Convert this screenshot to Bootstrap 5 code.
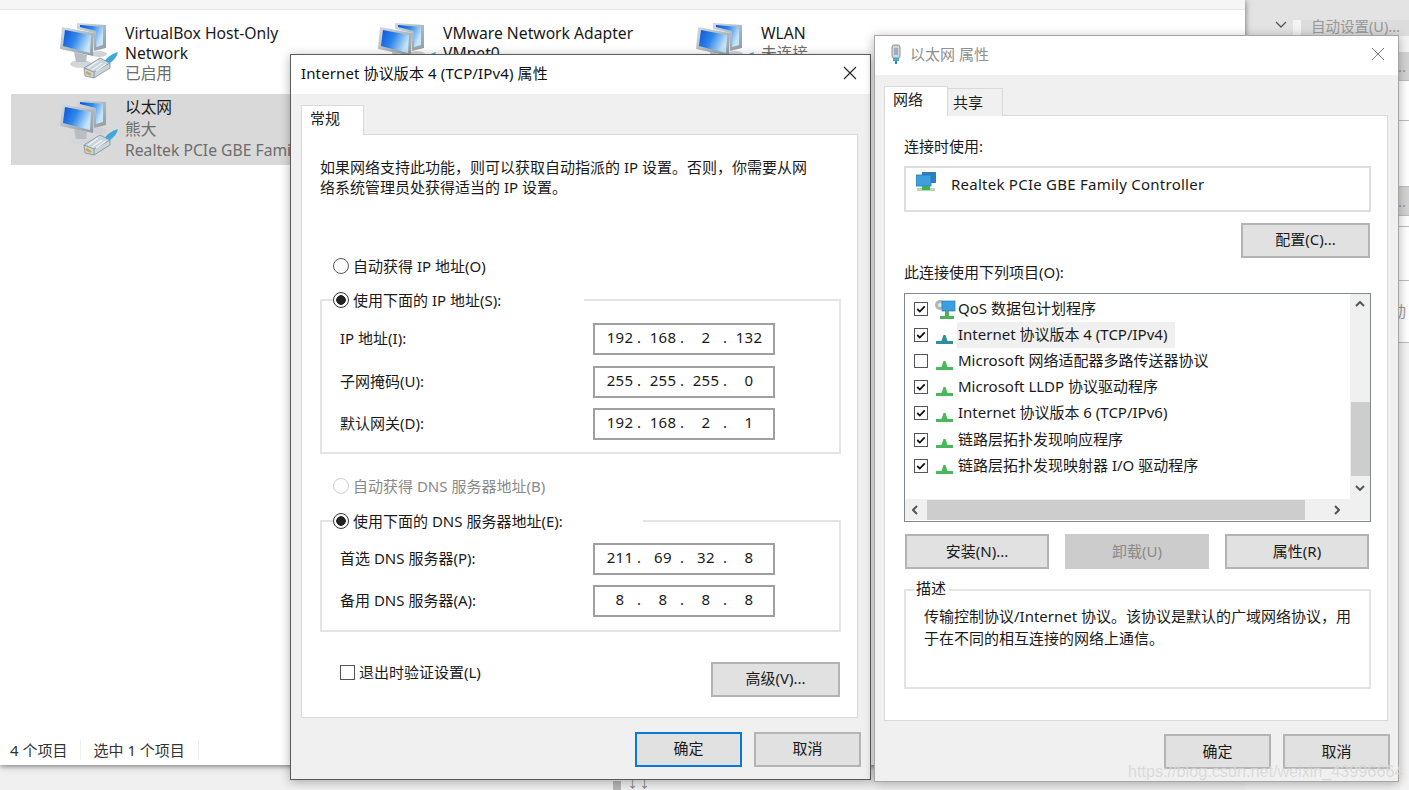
<!DOCTYPE html>
<html lang="zh-CN">
<head>
    <meta charset="UTF-8">
    <meta name="viewport" content="width=device-width, initial-scale=1">
    <title>以太网 属性</title>
    <link href="https://cdn.jsdelivr.net/npm/bootstrap@5.3.0/dist/css/bootstrap.min.css" rel="stylesheet">
    <style>
        body {
            background-color: #f0f0f0;
            font-family: "Noto Sans", "Noto Sans CJK SC", sans-serif;
            font-size: 15px;
            line-height: 20px;
            color: #1a1a1a;
            overflow: hidden;
        }
        .desk { position: relative; width: 1409px; height: 790px; overflow: hidden; }

        /* explorer window behind the dialogs */
        .explorer {
            position: absolute; left: 0; top: 0; width: 1245px; height: 765px;
            background: #fff; box-shadow: 0 1px 6px rgba(0,0,0,.55);
        }
        .explorer-top { height: 10px; background: #f6f6f6; border-bottom: 1px solid #e6e6e6; }
        .conn-grid { display: grid; grid-template-columns: repeat(3, 318px); padding: 13px 0 0 11px; }
        .conn-item { height: 71px; padding-left: 49px; display: flex; gap: 5px; }
        .conn-item.sel { background: #d9d9d9; }
        .conn-icon { width: 60px; height: 60px; flex: none; margin-top: -3px; }
        .sel .conn-icon { margin-top: 3px; }
        .conn-text { font-size: 15.7px; line-height: 20px; }
        .sel .conn-text { margin-top: 3px; line-height: 21.5px; }
        .conn-sub { color: #6d6d6d; }
        .status-row { position: absolute; left: 0; bottom: 5px; color: #333; }
        .status-cell { padding: 0 13px 0 10px; border-right: 1px solid #eee; }
        .status-cell + .status-cell { padding-left: 12px; }

        /* what is left visible of the window on the right */
        .side-win { position: absolute; left: 1245px; top: 0; width: 164px; height: 790px; background: #f4f4f4; color: #999; }
        .side-band { height: 20px; background: #e3e3e3; }
        .side-tool { height: 16px; background: #e3e3e3; display: flex; }
        .side-tool svg { margin: 1px 0 0 30px; }
        .side-sep { width: 8px; margin-left: 6px; background: #f4f4f4; }
        .side-auto { flex: 1; background: #dcdcdc; padding-left: 10px; font-size: 14.5px; line-height: 12px; }
        .side-row { text-align: right; padding-right: 3px; background: #fff; border-bottom: 1px solid #bdbdbd; }
        .side-gray { background: #d3d3d3; line-height: 28px; }

        .dock-bit { position: absolute; left: 613px; top: 781px; width: 8px; height: 9px; background: #b5b5b5; }
        .dock-arrows { position: absolute; left: 627px; top: 778px; font-size: 11px; line-height: 12px; color: #777; letter-spacing: 1px; }

        /* dialogs */
        .dlg { position: absolute; background: #f0f0f0; display: flex; flex-direction: column; }
        .dlg-ip { left: 290px; top: 54px; width: 581px; height: 726px; border: 1px solid #5a5a5a; box-shadow: 0 2px 10px rgba(0,0,0,.3); }
        .dlg-eth { left: 874px; top: 35px; width: 525px; height: 747px; border: 1px solid #a6a6a6; box-shadow: 0 2px 10px rgba(0,0,0,.3); }
        .dlg-title { height: 39px; flex: none; background: #fff; display: flex; align-items: center; color: #111; }
        .dlg-ip .dlg-title { padding: 0 13px 3px 10px; letter-spacing: .12px; }
        .dlg-eth .dlg-title { padding: 0 13px 3px 15px; color: #8f8f8f; }
        .dlg-close { margin-left: auto; }
        .dlg-body { flex: 1; }
        .dlg-ip .dlg-body { padding: 11px 9px 0 10px; }
        .dlg-eth .dlg-body { padding: 11px 8px 0 9px; }

        .nav-tabs.win-tabs { border-bottom: 0; position: relative; z-index: 1; align-items: flex-end; height: 30px; }
        .win-tabs .nav-link {
            border-radius: 0; padding: 0 0 0 8px; margin: 0; color: #1a1a1a; height: 28px; line-height: 26px;
            border: 1px solid #d9d9d9; border-bottom: 0; background: #f0f0f0;
        }
        .win-tabs .nav-link.active { height: 30px; line-height: 24px; background: #fff; border-color: #d9d9d9; color: #1a1a1a; }
        .tab-ip { width: 63px; }
        .tab-net { width: 64px; }
        .win-tabs .tab-share { width: 56px; padding-left: 5px; margin-left: -1px; }
        .tab-panel { background: #fff; border: 1px solid #d9d9d9; margin-top: -1px; }
        .dlg-ip .tab-panel { height: 584px; margin-right: 3px; padding: 22px 16px 0 18px; }
        .dlg-eth .tab-panel { height: 606px; margin-right: 2px; padding: 20px 16px 0 19px; }

        .win-btn {
            --bs-btn-padding-y: 0; --bs-btn-padding-x: 0; --bs-btn-font-size: 15px;
            height: 35px; border-radius: 0; border: 2px solid #b4b4b4; background: #e1e1e1; color: #1a1a1a;
        }
        .dlg-ip .win-btn { padding-bottom: 3px; }
        .win-btn:disabled { background: #cccccc; border-color: #cccccc; color: #8a8a8a; opacity: 1; }
        .win-btn-def { border-color: #0a78d7; }
        .btn-foot { width: 107px; }
        .foot-row { display: flex; justify-content: flex-end; gap: 12px; margin-top: 13px; }
        .dlg-ip .foot-row { margin-top: 14px; }

        /* radios and checks */
        .win-opt { display: flex; align-items: center; min-height: 0; height: 20px; gap: 4px; margin: 0; padding: 0; }
        .win-opt .form-check-input {
            width: 16px; height: 16px; margin: 0; flex: none; float: none;
            border: 1.5px solid #5a5a5a; background-color: #fff; box-shadow: none; opacity: 1;
        }
        .win-opt .form-check-input:checked[type=radio] {
            background-color: #fff; border-color: #333;
            background-image: radial-gradient(circle, #222 0 4.5px, transparent 5px);
        }
        .win-opt .form-check-input:disabled { border-color: #cfcfcf; }
        .win-opt .form-check-input[type=checkbox] { border-radius: 0; width: 15px; height: 15px; border-color: #555; }
        .win-opt .form-check-input:checked[type=checkbox] {
            border-color: #555;
            background-image: url("data:image/svg+xml,%3csvg xmlns='http://www.w3.org/2000/svg' viewBox='0 0 16 16'%3e%3cpath fill='none' stroke='%23111' stroke-width='2.4' d='M3 8l3.4 3.4L13 4.5'/%3e%3c/svg%3e");
            background-size: 100%;
        }
        .opt-off { color: #8a8a8a; }

        .ip-intro { margin: 0 0 59px 0; }
        .ip-auto { margin-left: 13px; }
        .grp { border: 2px solid #e4e4e4; }
        .grp-legend { display: flex; background: #fff; margin: -11px 0 0 11px; height: 20px; width: max-content; }
        .grp-ip { height: 155px; margin-top: 23px; }
        .grp-dns { height: 112px; margin-top: 24px; }
        .legend-ip { width: 251px; }
        .legend-dns { width: 310px; }
        .ip-rows { display: flex; flex-direction: column; gap: 10.5px; padding: 13px 64px 0 18px; }
        .grp-dns .ip-rows { padding-top: 12px; gap: 10px; }
        .ip-row { display: flex; justify-content: space-between; align-items: center; height: 32px; }
        .ip-row > span { margin-top: -2px; }
        .ip-box { display: flex; width: 182px; height: 32px; padding-left: 8px; line-height: 24px; border: 2px solid #a0a0a0; background: #fff; letter-spacing: .3px; }
        .ip-oct { width: 34px; text-align: center; }
        .ip-dot { width: 9px; }
        .dns-auto { margin: 22px 0 0 13px; }
        .ip-bottom { display: flex; justify-content: space-between; align-items: flex-start; margin: 30px 1px 0 20px; }
        .btn-adv { width: 129px; }

        /* ethernet dialog */
        .lbl { height: 20px; }
        .dev-box { display: flex; height: 46px; margin-top: 10px; border: 2px solid #dedede; padding: 4px 0 0 10px; gap: 15px; line-height: 24px; letter-spacing: .25px; }
        .btn-cfg { display: block; width: 129px; margin: 11px 1px 4px auto; padding-bottom: 2px; }
        .comp-list {
            display: grid; grid-template-columns: 1fr 20px; grid-template-rows: 205px 21px;
            height: 229px; margin-top: 11px; border: 1px solid #828790;
        }
        .comp-rows { overflow: hidden; padding-top: 2px; white-space: nowrap; }
        .comp-row { display: flex; align-items: center; height: 26.1px; padding-left: 9px; }
        .comp-row .win-opt .form-check-input { width: 14px; height: 14px; }
        .comp-row svg { margin: 0 4px 0 8px; flex: none; }
        .comp-row .qos-icon { margin: 0 0 0 7px; }
        .comp-name { padding: 0 8px 0 1px; height: 26px; line-height: 25px; }
        .comp-name.hi { background: #f0f0f0; }
        .vbar { display: flex; flex-direction: column; background: #f0f0f0; align-items: center; }
        .vbar svg { margin-top: 7px; }
        .vthumb { width: 19px; height: 74px; background: #cdcdcd; margin-top: 95px; }
        .vbar .arrow-down { margin-top: 9px; }
        .hbar { display: flex; align-items: center; background: #f0f0f0; }
        .hbar svg { margin: 0 7px; flex: none; }
        .hthumb { width: 378px; height: 20px; background: #cdcdcd; margin-left: 2px; }
        .hbar .hbar-end { margin-left: auto; margin-right: 10px; }
        .corner { background: #f0f0f0; }
        .act-row { display: flex; gap: 16px; margin: 12px 1px 0 1px; }
        .act-row .btn { width: 144px; }
        .grp-desc { height: 100px; margin-top: 20px; }
        .legend-desc { padding: 0 3px 0 1px; margin: -13px 0 0 9px; }
        .desc-text { padding: 7px 14px 0 18px; line-height: 22px; }

        .mark-url {
            position: absolute; left: 1128px; top: 761px; font-family: "Liberation Sans", sans-serif;
            font-size: 16.2px; line-height: 20px; color: rgba(205,205,205,.72); text-shadow: 0 0 1px rgba(255,255,255,.6);
            pointer-events: none;
        }
    </style>
</head>
<body>

<svg width="0" height="0" class="d-block position-absolute">
    <defs>
        <linearGradient id="scr" x1="0" y1="0" x2="1" y2="0.4">
            <stop offset="0" stop-color="#0a52d6"/>
            <stop offset=".5" stop-color="#2f86ea"/>
            <stop offset="1" stop-color="#c4e4f8"/>
        </linearGradient>
        <linearGradient id="frm" x1="0" y1="0" x2="1" y2="1">
            <stop offset="0" stop-color="#d3dbe0"/>
            <stop offset="1" stop-color="#8f9aa3"/>
        </linearGradient>
        <symbol id="net-big" viewBox="0 0 60 60">
            <ellipse cx="39" cy="34" rx="8" ry="3" fill="#cfd3d6"/>
            <polygon points="17,3 46,5 46,28 34,31 34,13 17,9" fill="url(#frm)"/>
            <polygon points="20,5 43,7 43,25 36,27 36,11 20,7" fill="url(#scr)"/>
            <ellipse cx="21" cy="44" rx="11" ry="4" fill="#d4d7d9"/>
            <polygon points="14,32 27,35 26,42 16,42" fill="#b8bec3"/>
            <polygon points="2,7 34,13 33,36 0,29" fill="url(#frm)"/>
            <polygon points="5,10 31,15 30,33 3,26" fill="url(#scr)"/>
            <polygon points="24,48 40,38 50,43 50,48 34,58 25,56" fill="#c9d5da" stroke="#7f8f97" stroke-width=".8"/>
            <path d="M24 48l10 4 16-9M34 52v6" stroke="#7f8f97" stroke-width=".8" fill="none"/>
            <path d="M28 48l10-7M32 50l10-7M36 51l10-7" stroke="#f0f5f7" stroke-width="1.200" fill="none"/>
            <path d="M26 52l5 3" stroke="#c9a94f" stroke-width="2.500"/>
            <path d="M45 41c3-5 7-7 13-9-1 5-4 8-8 11z" fill="#3fa9dc"/>
        </symbol>
        <symbol id="proto" viewBox="0 0 17 17">
            <path d="M0 14h17v3H0z" fill="currentColor"/>
            <path d="M5.500 14l2-6h2l2 6z" fill="currentColor"/>
        </symbol>
    </defs>
</svg>

<div class="desk">

    <div class="side-win">
        <div class="side-band"></div>
        <div class="side-tool">
            <svg width="12" height="8" viewBox="0 0 12 8"><path d="M1 1l5 5 5-5" fill="none" stroke="#555" stroke-width="1.300"/></svg>
            <div class="side-sep"></div>
            <div class="side-auto text-nowrap">自动设置(U)...</div>
        </div>
        <div class="side-row side-gray mt-3">..</div>
        <div class="side-row" style="height: 40px"></div>
        <div class="side-row" style="height: 66px"></div>
        <div class="side-row side-gray">)..</div>
        <div class="side-row" style="height: 11px"></div>
        <div class="side-row" style="height: 54px"></div>
        <div class="side-row" style="height: 62px; padding-top: 20px">自动</div>
    </div>

    <div class="explorer">
        <div class="explorer-top"></div>
        <div class="conn-grid">
            <div class="conn-item">
                <svg class="conn-icon"><use href="#net-big"/></svg>
                <div class="conn-text">VirtualBox Host-Only<br>Network<br><span class="conn-sub">已启用</span></div>
            </div>
            <div class="conn-item">
                <svg class="conn-icon"><use href="#net-big"/></svg>
                <div class="conn-text">VMware Network Adapter<br>VMnet0</div>
            </div>
            <div class="conn-item">
                <svg class="conn-icon"><use href="#net-big"/></svg>
                <div class="conn-text">WLAN<br><span class="conn-sub">未连接</span></div>
            </div>
            <div class="conn-item sel">
                <svg class="conn-icon"><use href="#net-big"/></svg>
                <div class="conn-text">以太网<br><span class="conn-sub">熊大</span><br><span class="conn-sub text-nowrap">Realtek PCIe GBE Family Controller</span></div>
            </div>
        </div>
        <div class="status-row d-flex">
            <div class="status-cell">4 个项目</div>
            <div class="status-cell">选中 1 个项目</div>
        </div>
    </div>

    <div class="dock-bit"></div>
    <div class="dock-arrows">↓↓</div>

    <div class="dlg dlg-ip">
        <div class="dlg-title">
            <span>Internet 协议版本 4 (TCP/IPv4) 属性</span>
            <svg class="dlg-close" width="14" height="14" viewBox="0 0 14 14"><path d="M1 1l12 12M13 1L1 13" stroke="#222" stroke-width="1.100"/></svg>
        </div>
        <div class="dlg-body">
            <ul class="nav nav-tabs win-tabs">
                <li class="nav-item"><a class="nav-link active tab-ip" href="#">常规</a></li>
            </ul>
            <div class="tab-panel">
                <p class="ip-intro">如果网络支持此功能，则可以获取自动指派的 IP 设置。否则，你需要从网<br>络系统管理员处获得适当的 IP 设置。</p>
                <label class="form-check win-opt ip-auto"><input class="form-check-input" type="radio" name="ipm">自动获得 IP 地址(O)</label>

                <div class="grp grp-ip">
                    <label class="form-check win-opt grp-legend legend-ip"><input class="form-check-input" type="radio" name="ipm" checked>使用下面的 IP 地址(S):</label>
                    <div class="ip-rows">
                        <div class="ip-row">
                            <span>IP 地址(I):</span>
                            <div class="ip-box"><span class="ip-oct">192</span><span class="ip-dot">.</span><span class="ip-oct">168</span><span class="ip-dot">.</span><span class="ip-oct">2</span><span class="ip-dot">.</span><span class="ip-oct">132</span></div>
                        </div>
                        <div class="ip-row">
                            <span>子网掩码(U):</span>
                            <div class="ip-box"><span class="ip-oct">255</span><span class="ip-dot">.</span><span class="ip-oct">255</span><span class="ip-dot">.</span><span class="ip-oct">255</span><span class="ip-dot">.</span><span class="ip-oct">0</span></div>
                        </div>
                        <div class="ip-row">
                            <span>默认网关(D):</span>
                            <div class="ip-box"><span class="ip-oct">192</span><span class="ip-dot">.</span><span class="ip-oct">168</span><span class="ip-dot">.</span><span class="ip-oct">2</span><span class="ip-dot">.</span><span class="ip-oct">1</span></div>
                        </div>
                    </div>
                </div>

                <label class="form-check win-opt dns-auto opt-off"><input class="form-check-input" type="radio" name="dnsm" disabled>自动获得 DNS 服务器地址(B)</label>

                <div class="grp grp-dns">
                    <label class="form-check win-opt grp-legend legend-dns"><input class="form-check-input" type="radio" name="dnsm" checked>使用下面的 DNS 服务器地址(E):</label>
                    <div class="ip-rows">
                        <div class="ip-row">
                            <span>首选 DNS 服务器(P):</span>
                            <div class="ip-box"><span class="ip-oct">211</span><span class="ip-dot">.</span><span class="ip-oct">69</span><span class="ip-dot">.</span><span class="ip-oct">32</span><span class="ip-dot">.</span><span class="ip-oct">8</span></div>
                        </div>
                        <div class="ip-row">
                            <span>备用 DNS 服务器(A):</span>
                            <div class="ip-box"><span class="ip-oct">8</span><span class="ip-dot">.</span><span class="ip-oct">8</span><span class="ip-dot">.</span><span class="ip-oct">8</span><span class="ip-dot">.</span><span class="ip-oct">8</span></div>
                        </div>
                    </div>
                </div>

                <div class="ip-bottom">
                    <label class="form-check win-opt"><input class="form-check-input" type="checkbox">退出时验证设置(L)</label>
                    <button type="button" class="btn win-btn btn-adv">高级(V)...</button>
                </div>
            </div>
            <div class="foot-row">
                <button type="button" class="btn win-btn win-btn-def btn-foot">确定</button>
                <button type="button" class="btn win-btn btn-foot">取消</button>
            </div>
        </div>
    </div>

    <div class="dlg dlg-eth">
        <div class="dlg-title">
            <svg width="12" height="20" viewBox="0 0 12 20" class="me-2">
                <rect x="2" y="1" width="8" height="13" rx="2" fill="#cfd6dc" stroke="#8a949c"/>
                <rect x="4" y="4" width="4" height="7" fill="#9fb0bc"/>
                <path d="M3 14h6v3H3z" fill="#4aa7d8"/><path d="M5 17h2v3H5z" fill="#2f86c0"/>
            </svg>
            <span>以太网 属性</span>
            <svg class="dlg-close" width="14" height="14" viewBox="0 0 14 14"><path d="M1 1l12 12M13 1L1 13" stroke="#777" stroke-width="1"/></svg>
        </div>
        <div class="dlg-body">
            <ul class="nav nav-tabs win-tabs">
                <li class="nav-item"><a class="nav-link active tab-net" href="#">网络</a></li>
                <li class="nav-item"><a class="nav-link tab-share" href="#">共享</a></li>
            </ul>
            <div class="tab-panel">
                <div class="lbl">连接时使用:</div>
                <div class="dev-box">
                    <svg width="20" height="20" viewBox="0 0 20 20" class="flex-none">
                        <rect x="6" y="0" width="14" height="11" fill="#2f7fc0"/>
                        <rect x="0" y="3" width="15" height="11" fill="#3d9fe0" stroke="#2579b5" stroke-width=".8"/>
                        <rect x="1" y="16" width="18" height="3" fill="#b8d8b0"/><rect x="6" y="14" width="8" height="4" fill="#3fb24f"/>
                    </svg>
                    <span>Realtek PCIe GBE Family Controller</span>
                </div>
                <button type="button" class="btn win-btn btn-cfg">配置(C)...</button>
                <div class="lbl">此连接使用下列项目(O):</div>
                <div class="comp-list">
                    <div class="comp-rows">
                        <div class="comp-row">
                            <label class="form-check win-opt"><input class="form-check-input" type="checkbox" checked></label>
                            <svg class="qos-icon" width="22" height="20" viewBox="0 0 22 20">
                                <circle cx="5" cy="6" r="5" fill="#aeb6bc"/>
                                <circle cx="5" cy="6" r="2" fill="#e6e9eb"/>
                                <rect x="7" y="2" width="13" height="10" fill="#3d9fe0" stroke="#2579b5" stroke-width=".7"/>
                                <path d="M5 17h14v3H5zM10 12h4v5h-4z" fill="#4cb35a"/>
                            </svg>
                            <span class="comp-name">QoS 数据包计划程序</span>
                        </div>
                        <div class="comp-row">
                            <label class="form-check win-opt"><input class="form-check-input" type="checkbox" checked></label>
                            <svg width="17" height="17" style="color: #2e8f9d"><use href="#proto"/></svg>
                            <span class="comp-name hi">Internet 协议版本 4 (TCP/IPv4)</span>
                        </div>
                        <div class="comp-row">
                            <label class="form-check win-opt"><input class="form-check-input" type="checkbox"></label>
                            <svg width="17" height="17" style="color: #48b85a"><use href="#proto"/></svg>
                            <span class="comp-name">Microsoft 网络适配器多路传送器协议</span>
                        </div>
                        <div class="comp-row">
                            <label class="form-check win-opt"><input class="form-check-input" type="checkbox" checked></label>
                            <svg width="17" height="17" style="color: #48b85a"><use href="#proto"/></svg>
                            <span class="comp-name">Microsoft LLDP 协议驱动程序</span>
                        </div>
                        <div class="comp-row">
                            <label class="form-check win-opt"><input class="form-check-input" type="checkbox" checked></label>
                            <svg width="17" height="17" style="color: #48b85a"><use href="#proto"/></svg>
                            <span class="comp-name">Internet 协议版本 6 (TCP/IPv6)</span>
                        </div>
                        <div class="comp-row">
                            <label class="form-check win-opt"><input class="form-check-input" type="checkbox" checked></label>
                            <svg width="17" height="17" style="color: #48b85a"><use href="#proto"/></svg>
                            <span class="comp-name">链路层拓扑发现响应程序</span>
                        </div>
                        <div class="comp-row">
                            <label class="form-check win-opt"><input class="form-check-input" type="checkbox" checked></label>
                            <svg width="17" height="17" style="color: #48b85a"><use href="#proto"/></svg>
                            <span class="comp-name">链路层拓扑发现映射器 I/O 驱动程序</span>
                        </div>
                    </div>
                    <div class="vbar">
                        <svg width="10" height="6" viewBox="0 0 10 6"><path d="M1 5l4-4 4 4" fill="none" stroke="#555" stroke-width="2"/></svg>
                        <div class="vthumb"></div>
                        <svg class="arrow-down" width="10" height="6" viewBox="0 0 10 6"><path d="M1 1l4 4 4-4" fill="none" stroke="#555" stroke-width="2"/></svg>
                    </div>
                    <div class="hbar">
                        <svg width="6" height="10" viewBox="0 0 6 10"><path d="M5 1L1 5l4 4" fill="none" stroke="#555" stroke-width="2"/></svg>
                        <div class="hthumb"></div>
                        <svg class="hbar-end" width="6" height="10" viewBox="0 0 6 10"><path d="M1 1l4 4-4 4" fill="none" stroke="#555" stroke-width="2"/></svg>
                    </div>
                    <div class="corner"></div>
                </div>
                <div class="act-row">
                    <button type="button" class="btn win-btn">安装(N)...</button>
                    <button type="button" class="btn win-btn" disabled>卸载(U)</button>
                    <button type="button" class="btn win-btn">属性(R)</button>
                </div>
                <div class="grp grp-desc">
                    <div class="grp-legend legend-desc">描述</div>
                    <div class="desc-text">传输控制协议/Internet 协议。该协议是默认的广域网络协议，用<br>于在不同的相互连接的网络上通信。</div>
                </div>
            </div>
            <div class="foot-row">
                <button type="button" class="btn win-btn btn-foot">确定</button>
                <button type="button" class="btn win-btn btn-foot">取消</button>
            </div>
        </div>
    </div>

    <div class="mark-url">https://blog.csdn.net/weixin_43996664</div>
</div>

<script src="https://cdn.jsdelivr.net/npm/bootstrap@5.3.0/dist/js/bootstrap.bundle.min.js"></script>
</body>
</html>
